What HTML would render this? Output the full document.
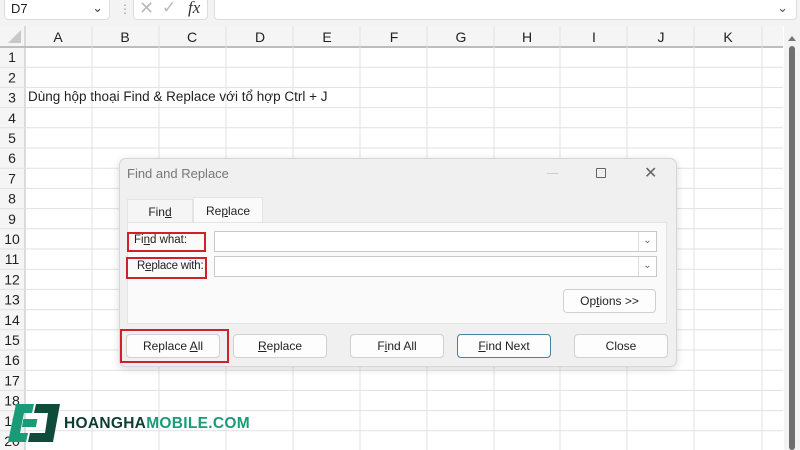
<!DOCTYPE html>
<html><head><meta charset="utf-8"><style>
*{box-sizing:border-box;margin:0;padding:0}
body{width:800px;height:450px;overflow:hidden;background:#fff;font-family:"Segoe UI","Liberation Sans","DejaVu Sans",sans-serif;position:relative;font-size:13px;color:#222}
.abs{position:absolute}
.btn{position:absolute;background:#fdfdfd;border:1px solid #d0d0d0;border-radius:4px;font-size:12px;text-align:center;line-height:22px;color:#222}
.red{position:absolute;border:2px solid #d0202a}
u{text-decoration:underline}
</style></head><body>
<div class="abs" style="left:0;top:0;width:800px;height:26px;background:#f3f3f3"></div>
<div class="abs" style="left:4px;top:0;width:106px;height:20px;background:#fff;border:1px solid #ddd;border-top:none;border-radius:0 0 4px 4px;font-size:13px;padding:1px 6px">D7<span style="position:absolute;right:6px;top:0;color:#444">&#8964;</span></div>
<div class="abs" style="left:119px;top:2px;color:#999;font-size:12px">⋮</div>
<div class="abs" style="left:133px;top:0;width:75px;height:20px;background:#fff;border:1px solid #ddd;border-top:none;border-radius:0 0 4px 4px"></div>
<div class="abs" style="left:139px;top:-2px;color:#bbb;font-size:18px">✕</div>
<div class="abs" style="left:162px;top:-2px;color:#bbb;font-size:17px">✓</div>
<div class="abs" style="left:188px;top:-2px;font-family:'Liberation Serif',serif;font-style:italic;font-size:17px;color:#333">fx</div>
<div class="abs" style="left:214px;top:0;width:583px;height:20px;background:#fff;border:1px solid #ddd;border-top:none;border-radius:0 0 4px 4px"><span style="position:absolute;right:8px;top:0;color:#555">&#8964;</span></div>
<svg class="abs" style="left:0;top:26px" width="800" height="424">
<rect x="0" y="0" width="783" height="21" fill="#f5f5f5"/>
<rect x="0" y="0" width="25" height="424" fill="#f5f5f5"/>
<line x1="0" y1="21" x2="783" y2="21" stroke="#bdbdbd" stroke-width="2"/>
<line x1="25" y1="0" x2="25" y2="424" stroke="#bdbdbd"/>
<polygon points="21,4 21,17 8,17" fill="#c8c8c8"/>
<g stroke="#e1e1e1">
<line x1="92" y1="0" x2="92" y2="424"/><line x1="159" y1="0" x2="159" y2="424"/><line x1="226" y1="0" x2="226" y2="424"/><line x1="293" y1="0" x2="293" y2="424"/><line x1="360" y1="0" x2="360" y2="424"/><line x1="427" y1="0" x2="427" y2="424"/><line x1="494" y1="0" x2="494" y2="424"/><line x1="560" y1="0" x2="560" y2="424"/><line x1="627" y1="0" x2="627" y2="424"/><line x1="694" y1="0" x2="694" y2="424"/><line x1="762" y1="0" x2="762" y2="424"/>
</g>
<g stroke="#e1e1e1" id="rows"></g>
<g font-family="Liberation Sans,sans-serif" font-size="14" fill="#222" text-anchor="middle">
<text x="58" y="16">A</text><text x="125" y="16">B</text><text x="192" y="16">C</text><text x="260" y="16">D</text><text x="327" y="16">E</text><text x="394" y="16">F</text><text x="461" y="16">G</text><text x="527" y="16">H</text><text x="594" y="16">I</text><text x="661" y="16">J</text><text x="728" y="16">K</text>
</g>
<g id="rn" font-family="Liberation Sans,sans-serif" font-size="14" fill="#222" text-anchor="middle"></g>
<rect x="784" y="0" width="16" height="424" fill="#f3f3f3"/>
<polygon points="792,10 788,15 796,15" fill="#777"/>
<rect x="789" y="20" width="6" height="404" rx="3" fill="#6f6f6f"/>
</svg>
<script>
var r=document.getElementById('rows'),n=document.getElementById('rn'),s='',t='';
for(var i=1;i<=20;i++){var y=21+i*20.2;s+='<line x1="0" y1="'+y.toFixed(1)+'" x2="783" y2="'+y.toFixed(1)+'"/>';t+='<text x="12" y="'+(y-5).toFixed(1)+'">'+i+'</text>';}
r.innerHTML=s;n.innerHTML=t;
</script>
<div class="abs" style="left:28px;top:89px;font-size:13.5px;font-family:'Liberation Sans','DejaVu Sans',sans-serif">Dùng hộp thoại Find &amp; Replace với tổ hợp Ctrl + J</div>
<div class="abs" style="left:119px;top:158px;width:558px;height:209px;background:#f0f0f0;border:1px solid #d6d6d6;border-radius:7px;box-shadow:0 2px 8px rgba(0,0,0,.15)"></div>
<div class="abs" style="left:127px;top:166px;font-size:13px;color:#777">Find and Replace</div>
<div class="abs" style="left:547px;top:173px;width:11px;height:1px;background:#ccc"></div>
<div class="abs" style="left:596px;top:168px;width:10px;height:10px;border:1px solid #666;border-radius:1px"></div>
<div class="abs" style="left:644px;top:163px;font-size:16px;color:#666">✕</div>
<div class="abs" style="left:127px;top:199px;width:66px;height:24px;background:#f5f5f5;border:1px solid #e4e4e4;border-bottom:none;font-size:12px;text-align:center;line-height:24px">Fin<u>d</u></div>
<div class="abs" style="left:193px;top:197px;width:70px;height:26px;background:#fafafa;border:1px solid #e4e4e4;border-bottom:none;font-size:12px;text-align:center;line-height:26px">Re<u>p</u>lace</div>
<div class="abs" style="left:127px;top:222px;width:540px;height:102px;background:#fafafa;border:1px solid #e4e4e4"></div>
<div class="abs" style="left:134px;top:234px;font-size:11.5px">Fi<u>n</u>d what:</div>
<div class="abs" style="left:137px;top:260px;font-size:11.5px;letter-spacing:-0.2px">R<u>e</u>place with:</div>
<div class="red" style="left:127px;top:232px;width:79px;height:20px"></div>
<div class="red" style="left:126px;top:257px;width:81px;height:22px"></div>
<div class="abs" style="left:214px;top:231px;width:443px;height:21px;background:#fff;border:1px solid #c8c8c8"><div style="position:absolute;right:0;top:0;width:18px;height:19px;border-left:1px solid #ddd;color:#666;font-size:10px;text-align:center;line-height:17px">&#8964;</div></div>
<div class="abs" style="left:214px;top:256px;width:443px;height:21px;background:#fff;border:1px solid #c8c8c8"><div style="position:absolute;right:0;top:0;width:18px;height:19px;border-left:1px solid #ddd;color:#666;font-size:10px;text-align:center;line-height:17px">&#8964;</div></div>
<div class="btn" style="left:563px;top:289px;width:93px;height:24px">Op<u>t</u>ions &gt;&gt;</div>
<div class="btn" style="left:126px;top:334px;width:94px;height:24px">Replace <u>A</u>ll</div>
<div class="red" style="left:120px;top:329px;width:109px;height:34px"></div>
<div class="btn" style="left:233px;top:334px;width:94px;height:24px"><u>R</u>eplace</div>
<div class="btn" style="left:350px;top:334px;width:94px;height:24px">F<u>i</u>nd All</div>
<div class="btn" style="left:457px;top:334px;width:94px;height:24px;border:1px solid #4a7fa0"><u>F</u>ind Next</div>
<div class="btn" style="left:574px;top:334px;width:94px;height:24px">Close</div>
<svg class="abs" style="left:8px;top:404px" width="54" height="38">
<polygon points="8,0 26,0 24,9 16,9 12,29 20,29 18,38 0,38" fill="#1a9b78"/>
<polygon points="28,0 52,0 45,38 20,38 22,29 37,29 40,9 26,9" fill="#0f4a3a"/>
<rect x="18" y="15" width="14" height="8" fill="#1a9b78" transform="skewX(-10)"/>
</svg>
<div class="abs" style="left:64px;top:415px;font-family:'Liberation Sans',sans-serif;font-weight:bold;font-size:15.5px;letter-spacing:0.3px"><span style="color:#0f3d32">HOANGHA</span><span style="color:#1a9b78">MOBILE.COM</span></div>
</body></html>
